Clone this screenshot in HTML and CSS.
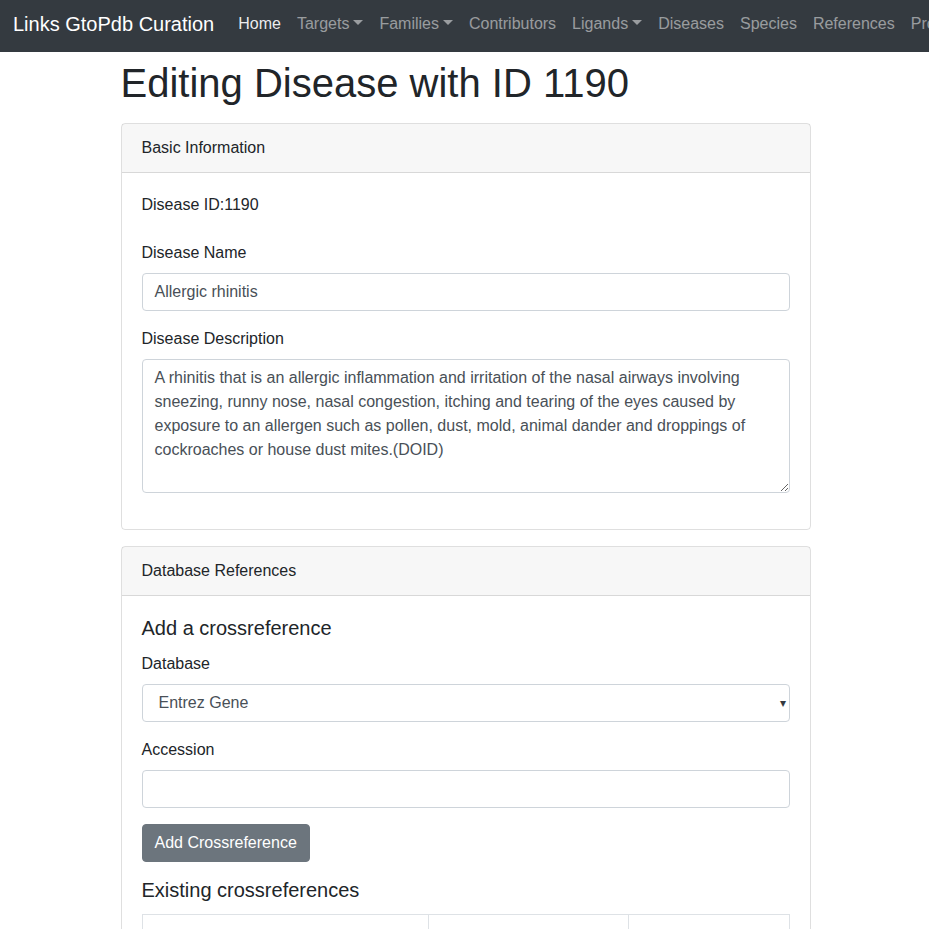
FILE: index.html
```html
<!DOCTYPE html>
<html>
<head>
<meta charset="utf-8">
<link rel="stylesheet" href="styles.css">
</head>
<body>
<nav class="navbar">
  <span class="brand">Links GtoPdb Curation</span>
  <ul class="nav">
    <li class="nav-link active">Home</li>
    <li class="nav-link dropdown">Targets</li>
    <li class="nav-link dropdown">Families</li>
    <li class="nav-link">Contributors</li>
    <li class="nav-link dropdown">Ligands</li>
    <li class="nav-link">Diseases</li>
    <li class="nav-link">Species</li>
    <li class="nav-link">References</li>
    <li class="nav-link">Profile</li>
  </ul>
</nav>
<main class="container">
  <h1 class="title">Editing Disease with ID 1190</h1>
  <section class="card">
    <div class="card-header">Basic Information</div>
    <div class="card-body">
      <p class="id-line">Disease ID:1190</p>
      <div class="form-group">
        <label class="label">Disease Name</label>
        <div class="input">Allergic rhinitis</div>
      </div>
      <div class="form-group">
        <label class="label">Disease Description</label>
        <textarea class="textarea" rows="5">A rhinitis that is an allergic inflammation and irritation of the nasal airways involving sneezing, runny nose, nasal congestion, itching and tearing of the eyes caused by exposure to an allergen such as pollen, dust, mold, animal dander and droppings of cockroaches or house dust mites.(DOID)</textarea>
      </div>
    </div>
  </section>
  <section class="card">
    <div class="card-header">Database References</div>
    <div class="card-body">
      <h5 class="subhead">Add a crossreference</h5>
      <div class="form-group">
        <label class="label">Database</label>
        <div class="input select">Entrez Gene<span class="arrow">▾</span></div>
      </div>
      <div class="form-group">
        <label class="label">Accession</label>
        <div class="input"></div>
      </div>
      <button class="btn">Add Crossreference</button>
      <h5 class="subhead existing">Existing crossreferences</h5>
      <table class="table">
        <tr><th class="c1"></th><th class="c2"></th><th class="c3"></th></tr>
        <tr><td></td><td></td><td></td></tr>
      </table>
    </div>
  </section>
</main>
</body>
</html>
```
FILE: styles.css
```css
* { box-sizing: border-box; }
html, body { margin: 0; padding: 0; }
body {
  font-family: "Liberation Sans", Arial, sans-serif;
  font-size: 16px;
  line-height: 24px;
  color: #212529;
  background: #fff;
}
.navbar {
  height: 52px;
  background: #343a40;
  display: flex;
  align-items: center;
  padding: 0 0 0 13px;
  white-space: nowrap;
  overflow: hidden;
}
.brand {
  color: #fff;
  font-size: 20px;
  line-height: 30px;
  margin-right: 16px;
  margin-top: -4px;
}
.nav {
  list-style: none;
  margin: 0;
  padding: 0;
  display: flex;
  margin-top: -4px;
}
.nav-link {
  padding: 8px;
  color: rgba(255,255,255,.5);
  font-size: 16px;
  line-height: 24px;
}
.nav-link.active { color: rgba(255,255,255,.92); }
.dropdown::after {
  content: "";
  display: inline-block;
  margin-left: 4px;
  vertical-align: 4px;
  border-top: 5px solid;
  border-right: 5px solid transparent;
  border-left: 5px solid transparent;
}
.container {
  width: 720px;
  margin: 0 auto;
  padding: 0 15px;
}
.title {
  font-size: 40px;
  line-height: 48px;
  font-weight: 400;
  margin: 7px 0 0 0;
  padding-bottom: 16px;
  padding-left: 1px;
}
.card {
  border: 1px solid rgba(0,0,0,.125);
  border-radius: 4px;
  margin: 0 -1px 16px 1px;
}
.card-header {
  background: rgba(0,0,0,.03);
  border-bottom: 1px solid rgba(0,0,0,.125);
  padding: 12px 20px;
  line-height: 24px;
}
.card-body { padding: 20px; }
.id-line { margin: 0 0 24px 0; }
.form-group { margin-bottom: 16px; }
.label { display: block; margin-bottom: 8px; }
.input {
  height: 38px;
  border: 1px solid #ced4da;
  border-radius: 4px;
  padding: 6px 12px;
  line-height: 24px;
  color: #495057;
}
.select { position: relative; padding-left: 16px; color: #495057; }
.arrow {
  position: absolute;
  right: 3px;
  top: 6px;
  font-size: 12px;
  color: #343a40;
}
.textarea {
  display: block;
  width: 100%;
  height: 134px;
  border: 1px solid #ced4da;
  border-radius: 4px;
  padding: 6px 12px;
  font-family: "Liberation Sans", Arial, sans-serif;
  font-size: 16px;
  line-height: 24px;
  color: #495057;
  resize: vertical;
  margin: 0;
}
.subhead {
  font-size: 20px;
  line-height: 24px;
  font-weight: 400;
  margin: 0 0 12px 0;
}
.btn {
  display: block;
  background: #6c757d;
  color: #fff;
  border: 1px solid #6c757d;
  border-radius: 4px;
  padding: 6px 12px;
  font-family: "Liberation Sans", Arial, sans-serif;
  font-size: 16px;
  line-height: 24px;
  height: 38px;
}
.existing { margin-top: 16px; }
.table {
  width: 648px;
  border-collapse: collapse;
}
.table th, .table td {
  border: 1px solid #dee2e6;
  height: 48px;
}
.c1 { width: 286px; }
.c2 { width: 200px; }
```
